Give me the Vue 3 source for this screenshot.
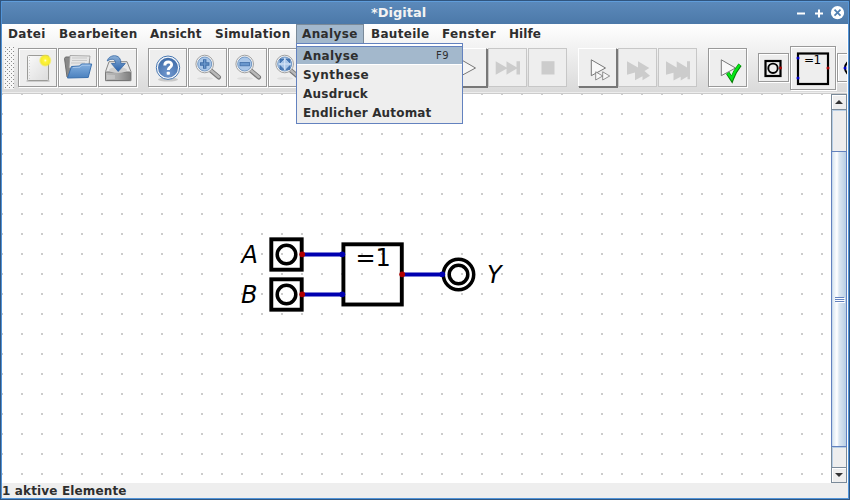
<script setup>
const menus = [
  { label: 'Datei', width: 51, spacing: 0.35 },
  { label: 'Bearbeiten', width: 91, spacing: 0.42 },
  { label: 'Ansicht', width: 65, spacing: 0.15 },
  { label: 'Simulation', width: 87, spacing: 0.28 },
  { label: 'Analyse', width: 68, spacing: 0.38, open: true },
  { label: 'Bauteile', width: 71, spacing: 0.3 },
  { label: 'Fenster', width: 67, spacing: 0.38 },
  { label: 'Hilfe', width: 50, spacing: 0.05 },
]

const entries = [
  { label: 'Analyse', key: 'F9', spacing: 0.38, active: true },
  { label: 'Synthese', spacing: 0.42 },
  { label: 'Ausdruck', spacing: 0.24 },
  { label: 'Endlicher Automat', spacing: 0.17 },
]

const groups = [
  [{ icon: 'new' }, { icon: 'open' }, { icon: 'save' }],
  [{ icon: 'help' }, { icon: 'zoomIn' }, { icon: 'zoomOut' }, { icon: 'fit' }],
  [{ icon: 'blank' }, { icon: 'blank' }, { icon: 'blank' }],
  [{ icon: 'play', raised: true }, { icon: 'forward', disabled: true }, { icon: 'stop', disabled: true }],
  [{ icon: 'micro', raised: true }, { icon: 'microFast', disabled: true }, { icon: 'microEnd', disabled: true }],
  [{ icon: 'check' }],
]
</script>

<template>
  <div class="window">
    <header class="titlebar">
      <span class="title">*Digital</span>
      <svg class="controls" width="50" height="22" viewBox="0 0 50 22">
        <path d="M-1 11.500h8M17 11.500h8M21 7.500v8" stroke="#fff" stroke-width="2" />
        <circle cx="39.500" cy="10.700" r="6.600" fill="#fff" />
        <path d="M36.500 7.700l6 6M42.500 7.700l-6 6" stroke="#5180b2" stroke-width="1.700" />
      </svg>
    </header>

    <div class="chrome">
      <nav class="menubar">
        <div v-for="m in menus" :key="m.label" class="menu" :class="{ open: m.open }" :style="{ width: m.width + 'px' }">
          <span :style="{ letterSpacing: m.spacing + 'px' }">{{ m.label }}</span>
          <div v-if="m.open" class="popup">
            <div v-for="e in entries" :key="e.label" class="entry" :class="{ active: e.active }">
              <span :style="{ letterSpacing: e.spacing + 'px' }">{{ e.label }}</span><span v-if="e.key" class="key">{{ e.key }}</span>
            </div>
          </div>
        </div>
      </nav>

      <div class="toolbar">
        <div class="grip"></div>
        <div v-for="(g, gi) in groups" :key="gi" class="group">
          <div v-for="(b, bi) in g" :key="bi" class="tool" :class="{ raised: b.raised, disabled: b.disabled }">
            <svg width="37" height="37" viewBox="1 1 37 37">
              <defs>
                <linearGradient id="paper" x1="0" y1="0" x2="1" y2="1"><stop offset="0" stop-color="#fafafa" /><stop offset="1" stop-color="#dcdcdc" /></linearGradient>
                <radialGradient id="sun"><stop offset="0" stop-color="#fffde0" /><stop offset=".25" stop-color="#fff53a" /><stop offset=".7" stop-color="#f5ea30" /><stop offset="1" stop-color="#f5ea30" stop-opacity="0" /></radialGradient>
                <linearGradient id="blue" x1="0" y1="0" x2="0" y2="1"><stop offset="0" stop-color="#84b0e0" /><stop offset="1" stop-color="#4b81be" /></linearGradient>
                <linearGradient id="grey" x1="0" y1="0" x2="1" y2="0"><stop offset="0" stop-color="#bbb" /><stop offset=".5" stop-color="#aaa" /><stop offset="1" stop-color="#7e7e7e" /></linearGradient>
                <linearGradient id="arrow" x1="0" y1="0" x2="0" y2="1"><stop offset="0" stop-color="#8fb2d8" /><stop offset="1" stop-color="#2860aa" /></linearGradient>
                <radialGradient id="orb" cx=".5" cy=".8" r=".8"><stop offset="0" stop-color="#7198cf" /><stop offset="1" stop-color="#3e6ba7" /></radialGradient>
              </defs>
              <template v-if="b.icon === 'new'">
                <path d="M8.500 33h23" stroke="#aaa" stroke-width="1" />
                <rect x="9.500" y="7.500" width="21" height="25" rx="1" fill="url(#paper)" stroke="#9b9b98" />
                <path d="M11.500 9v22" stroke="#cfcfcf" stroke-dasharray="1 2" />
                <circle cx="27.300" cy="12.500" r="6.500" fill="url(#sun)" />
              </template>
              <template v-else-if="b.icon === 'open'">
                <path d="M6.500 10.500l1-1.500h5l1 2h18l-2 18H9z" fill="#888" stroke="#6d6d6d" />
                <path d="M12 7.500l20 .5-1.500 12H11z" fill="#e7e7e7" stroke="#999" stroke-width=".8" />
                <path d="M14 10h15M14 12.500h15M13 15h14" stroke="#bbb" stroke-width=".7" />
                <path d="M13.500 18.500l8-.5 2-2h10.200l-3.500 13.500-20.700.5z" fill="url(#blue)" stroke="#3b71b0" />
                <path d="M15 19.500l7-.3 2-2h8" fill="none" stroke="#a8c8ec" />
              </template>
              <template v-else-if="b.icon === 'save'">
                <path d="M11 13.700h18l4 10v9H7.500v-9z" fill="#e8e8e8" stroke="#858585" />
                <rect x="7.500" y="24" width="25" height="8.500" rx="1" fill="url(#grey)" stroke="#777" />
                <ellipse cx="20" cy="22" rx="9" ry="3" fill="#cfcfcf" />
                <path d="M10 27v4M12 27v4M14 27v4M16 27v4" stroke="#ddd" stroke-width=".8" />
                <path d="M9.200 13c1-4 5-5.700 8.500-5.200 3.500.6 5.300 3.200 5.200 7.700h4.400l-7.100 8-6.800-8h4.100c.2-4-3-5.800-8.300-2.500z" fill="url(#arrow)" stroke="#3768a4" stroke-width=".8" />
              </template>
              <template v-else-if="b.icon === 'help'">
                <ellipse cx="20" cy="31.500" rx="10" ry="2" fill="#c8c8c8" />
                <circle cx="20" cy="19.700" r="11.700" fill="#f5f7fa" stroke="#4777b2" stroke-width="1" />
                <circle cx="20" cy="19.700" r="10" fill="url(#orb)" />
                <path d="M16.800 17.500c0-4.600 7-4.400 6.800-.7-.1 2.500-3.300 2.800-3.300 5.200" fill="none" stroke="#fff" stroke-width="2.900" />
                <rect x="18.700" y="23.800" width="3.200" height="3" rx=".8" fill="#fff" />
              </template>
              <template v-else-if="['zoomIn', 'zoomOut', 'fit'].includes(b.icon)">
                <ellipse cx="17" cy="30.500" rx="8" ry="1.500" fill="#dedede" />
                <path d="M22.500 22.300l8.300 7" stroke="#777" stroke-width="4.500" stroke-linecap="round" />
                <path d="M22.500 22l8.300 7" stroke="#b8b8b8" stroke-width="2.500" stroke-linecap="round" />
                <circle cx="16.700" cy="16" r="8.800" fill="#f4f4f4" stroke="#a2a2a2" />
                <circle cx="16.700" cy="16" r="7" fill="#a9c6e8" stroke="#7298c4" />
                <path v-if="b.icon === 'zoomIn'" d="M16.700 11.200v9.600M12 16h9.400" stroke="#416fa9" stroke-width="3.400" />
                <path v-if="b.icon === 'zoomIn'" d="M16.700 12v8M13 16h7.500" stroke="#6f9bcf" stroke-width="1.200" />
                <rect v-if="b.icon === 'zoomOut'" x="12" y="14.500" width="9.500" height="3.300" fill="#6997cd" stroke="#416fa9" stroke-width=".8" />
                <path v-if="b.icon === 'fit'" d="M12 15v-4h4zM18 11h4v4zM12 17.500v4h4zM18 21.500h4v-4z" fill="#477bb8" stroke="#3c6ca7" stroke-width=".7" />
                <path v-if="b.icon === 'fit'" d="M16.700 10v12M10.700 16h12" stroke="#d7e6f8" />
              </template>
              <path v-else-if="b.icon === 'play'" d="M13.300 11.800L27.500 20l-14.200 7.700z" fill="#f6f6f6" stroke="#777" />
              <path v-else-if="b.icon === 'forward'" d="M7.700 13.300L18.500 19.500V13.300L28.500 19.300V13.200H32v13.300h-3.500v-5.800l-10 6v-6L7.700 26.700z" fill="#ccc" />
              <rect v-else-if="b.icon === 'stop'" x="13.500" y="13.200" width="13" height="13.300" fill="#ccc" />
              <g v-else-if="b.icon === 'micro'" fill="#f8f8f8" stroke="#777">
                <path d="M13.300 11.800L27.500 20l-14.200 7.700z" />
                <path d="M17.700 23.800l7 4.200-7 4zM24.700 23.800l7 4.200-7 4z" stroke-width=".8" />
              </g>
              <path v-else-if="b.icon === 'microFast'" d="M9 13.300l11 6.200v-6.200l11.300 6.700-4.800 3 5.500 4.800-7.500 4.500v-4l-7.500 4v-7.800L9 26.700z" fill="#ccc" />
              <path v-else-if="b.icon === 'microEnd'" d="M8 13.300l10.700 6.200v-6.200L29 19.500v-6.300h3v18h-2.500v-2.700l-6.800 4v-3.700l-7.200 3.700v-7.700L8 26.700z" fill="#ccc" />
              <template v-else-if="b.icon === 'check'">
                <path d="M13.300 11.800L27.500 20l-14.200 7.700z" fill="#f8f8f8" stroke="#777" />
                <path d="M19.700 25l4.100 6.300c2-5.800 4.800-10.300 8.200-14.600" fill="none" stroke="#067b06" stroke-width="4" />
                <path d="M19.700 25l4 5.500c2-5.300 4.700-9.500 8-13.700" fill="none" stroke="#05e516" stroke-width="2.600" />
              </template>
            </svg>
          </div>
        </div>
        <div class="parts">
          <div class="tool small">
            <svg width="29" height="27" viewBox="1 1 29 27" fill="none">
              <rect x="7.500" y="8" width="15" height="15" stroke="#000" stroke-width="2.200" />
              <circle cx="15" cy="15.300" r="4.700" stroke="#000" stroke-width="1.900" />
              <circle cx="22.500" cy="15" r="1.400" fill="#b00000" />
            </svg>
          </div>
          <div class="tool large">
            <svg width="44" height="42" viewBox="1 1 44 42">
              <rect x="8" y="7.500" width="30" height="30.500" fill="none" stroke="#000" stroke-width="2.200" />
              <circle cx="8" cy="12" r="1.500" fill="#0000d0" />
              <circle cx="8" cy="32" r="1.500" fill="#0000d0" />
              <circle cx="38" cy="22" r="1.500" fill="#b00000" />
              <text x="14" y="18" class="small-gate">=1</text>
            </svg>
          </div>
          <div class="tool small">
            <svg width="29" height="27" viewBox="1 1 29 27" fill="none">
              <circle cx="15.500" cy="15" r="7.500" stroke="#000" stroke-width="2" />
              <circle cx="15.500" cy="15" r="4.200" stroke="#000" stroke-width="2" />
              <circle cx="8" cy="15" r="1.500" fill="#0000d0" />
            </svg>
          </div>
        </div>
      </div>
    </div>

    <main class="workspace">
      <div class="canvas">
        <svg width="829" height="389" viewBox="2 94 829 389">
          <g fill="none" stroke="#000" stroke-width="3.900">
            <rect x="271.300" y="239.300" width="30.400" height="30.400" />
            <circle cx="286.500" cy="254.500" r="9.300" stroke-width="3.500" />
            <rect x="271.300" y="279.300" width="30.400" height="30.400" />
            <circle cx="286.500" cy="294.500" r="9.300" stroke-width="3.500" />
            <rect x="343.400" y="244.300" width="58.400" height="60.200" />
            <circle cx="458.500" cy="274.500" r="15.200" stroke-width="3.500" />
            <circle cx="458.500" cy="274.500" r="9.300" stroke-width="3.500" />
          </g>
          <path d="M302 254.400h40M302 294.400h40M402 274.400h40" stroke="#0000b0" stroke-width="4" />
          <g fill="#0000b0">
            <circle cx="342.300" cy="254.300" r="2.900" /><circle cx="342.300" cy="294.300" r="2.900" /><circle cx="442.300" cy="274.300" r="2.900" />
          </g>
          <g fill="#b00000">
            <circle cx="302.200" cy="254.300" r="2.900" /><circle cx="302.200" cy="294.300" r="2.900" /><circle cx="402.200" cy="274.300" r="2.900" />
          </g>
          <g class="labels">
            <text x="241.500" y="263">A</text>
            <text x="241" y="303">B</text>
            <text x="487" y="283">Y</text>
            <text x="355.500" y="266" class="upright">=1</text>
          </g>
        </svg>
      </div>
      <div class="scrollbar">
        <div class="arrow up"><i></i></div>
        <div class="track before"></div>
        <div class="thumb"><b></b><b></b><b></b></div>
        <div class="track after"></div>
        <div class="arrow down"><i></i></div>
      </div>
    </main>

    <footer class="status">1 aktive Elemente</footer>
  </div>
</template>

<style>
body { margin: 0; overflow: hidden; }
</style>

<style scoped>
* { box-sizing: border-box; }
.window {
  width: 850px;
  height: 500px;
  display: flex;
  flex-direction: column;
  border: 1px solid #30557f;
  box-shadow: inset 0 0 0 1px #5294d8;
  padding: 0 2px 1px 1px;
  background-color: #fff;
  font: bold 12px/21px "DejaVu Sans", sans-serif;
  color: #2e2e2e;
}
.titlebar {
  height: 23px;
  flex: none;
  display: grid;
  grid-template-columns: 50px 1fr 50px;
  margin-right: -1px;
  background: linear-gradient(#5b89ba, #4c79a9);
  border-top: 1px solid #5f9ddb;
}
.title { grid-column: 2; text-align: center; padding-right: 53px; color: #f3f3f3; font-size: 13px; line-height: 22px; white-space: nowrap; }
.controls { display: block; overflow: visible; }
.chrome { flex: none; height: 70px; background: linear-gradient(#fff, #dadada 67px, #dadada 68px, #ededed 68px, #ededed 69px, #ccc 69px); }
.menubar { display: flex; height: 19px; }
.menu { position: relative; height: 19px; padding-left: 6px; white-space: nowrap; flex: none; }
.menu.open { background: #a3b8cc; border: solid #7a8a99; border-width: 1px 1px 0; padding-left: 5px; line-height: 19px; margin-right: 1px; }
.popup {
  position: absolute;
  z-index: 2;
  left: -1px;
  top: 18px;
  width: 167px;
  height: 81px;
  border: 1px solid #6382bf;
  background: #eee;
  padding-top: 2px;
  box-shadow: inset 0 2px #fff;
}
.entry { height: 19px; padding: 0 13px 0 6px; display: flex; justify-content: space-between; line-height: 21px; }
.entry.active { background: #a3b8cc; border-top: 1px solid #6382bf; border-bottom: 1px solid #fff; line-height: 18px; }
.key { font-size: 10px; font-weight: normal; letter-spacing: .4px; }
.toolbar { display: flex; height: 51px; padding: 5px 0 0 2px; overflow: hidden; }
.grip {
  width: 10px;
  height: 43px;
  margin: -2px 4px 0 0;
  flex: none;
  background-color: #f6f6f6;
  background-image: conic-gradient(from 0deg at 1px 1px, transparent 75%, #8a8a8a 0), conic-gradient(from 0deg at 1px 1px, transparent 75%, #8a8a8a 0);
  background-size: 4px 4px;
  background-position: 1px 1px, 3px 3px;
}
.group { display: flex; flex: none; gap: 1px; margin-right: 11px; }
.tool { width: 39px; height: 39px; flex: none; border: 1px solid #999; background: #eee; box-shadow: inset 1px 1px #fff, 1px 1px #fff; }
.tool svg { display: block; }
.tool.disabled { border-color: #c7c7c7; box-shadow: none; }
.tool.raised { border-color: #fff #777 #777 #fff; box-shadow: 1px 1px #777; }
.parts { display: flex; flex: none; gap: 1px; align-items: center; height: 44px; margin-top: -2px; }
.tool.small { width: 31px; height: 29px; margin-top: -1px; }
.tool.large { width: 46px; height: 44px; }
.small-gate { font: 12px "DejaVu Sans", sans-serif; letter-spacing: -.6px; fill: #000; }
.workspace { flex: none; height: 389px; display: flex; }
.canvas {
  width: 829px;
  flex: none;
  background-image: conic-gradient(from 0deg at 2px 2px, transparent 75%, #ccc 0);
  background-size: 20px 20px;
  background-position: 19px 19px;
}
.canvas svg { display: block; }
.labels { font: italic 24px "DejaVu Sans", sans-serif; fill: #000; }
.upright { font-style: normal; }
.scrollbar { width: 16px; display: flex; flex-direction: column; border-left: 1px solid #7a8a99; border-right: 1px solid #7a8a99; background: #eee; }
.arrow { height: 16px; flex: none; display: grid; place-items: center; border: solid #7a8a99; border-width: 1px 0; box-shadow: inset 1px 1px #fff; }
.arrow i { width: 0; height: 0; border: solid transparent; border-width: 0 4.500px 4px; }
.arrow.up i { border-bottom-color: #333; }
.arrow.down i { border-width: 4px 4.500px 0; border-top-color: #333; }
.track { border-left: 1px solid #b8cfe5; }
.track.before { height: 41px; border-top: 1px solid #b8cfe5; }
.track.after { flex: 1; border-top: 1px solid #b8cfe5; }
.thumb {
  height: 296px;
  flex: none;
  margin: 0 -1px;
  border: 1px solid #6382bf;
  background: linear-gradient(90deg, #b8cfe5 0, #dce8f3 1px, #fff 5px, #dce7f2 7px, #b8cfe5);
  display: flex;
  flex-direction: column;
  align-items: center;
  justify-content: center;
  gap: 1px;
}
.thumb b { width: 9px; height: 1px; background: #6382bf; box-shadow: 1px 1px #fff; }
.status { height: 15px; line-height: 17px; letter-spacing: .15px; background: #eee; flex: none; white-space: nowrap; margin-right: -1px; }
</style>
